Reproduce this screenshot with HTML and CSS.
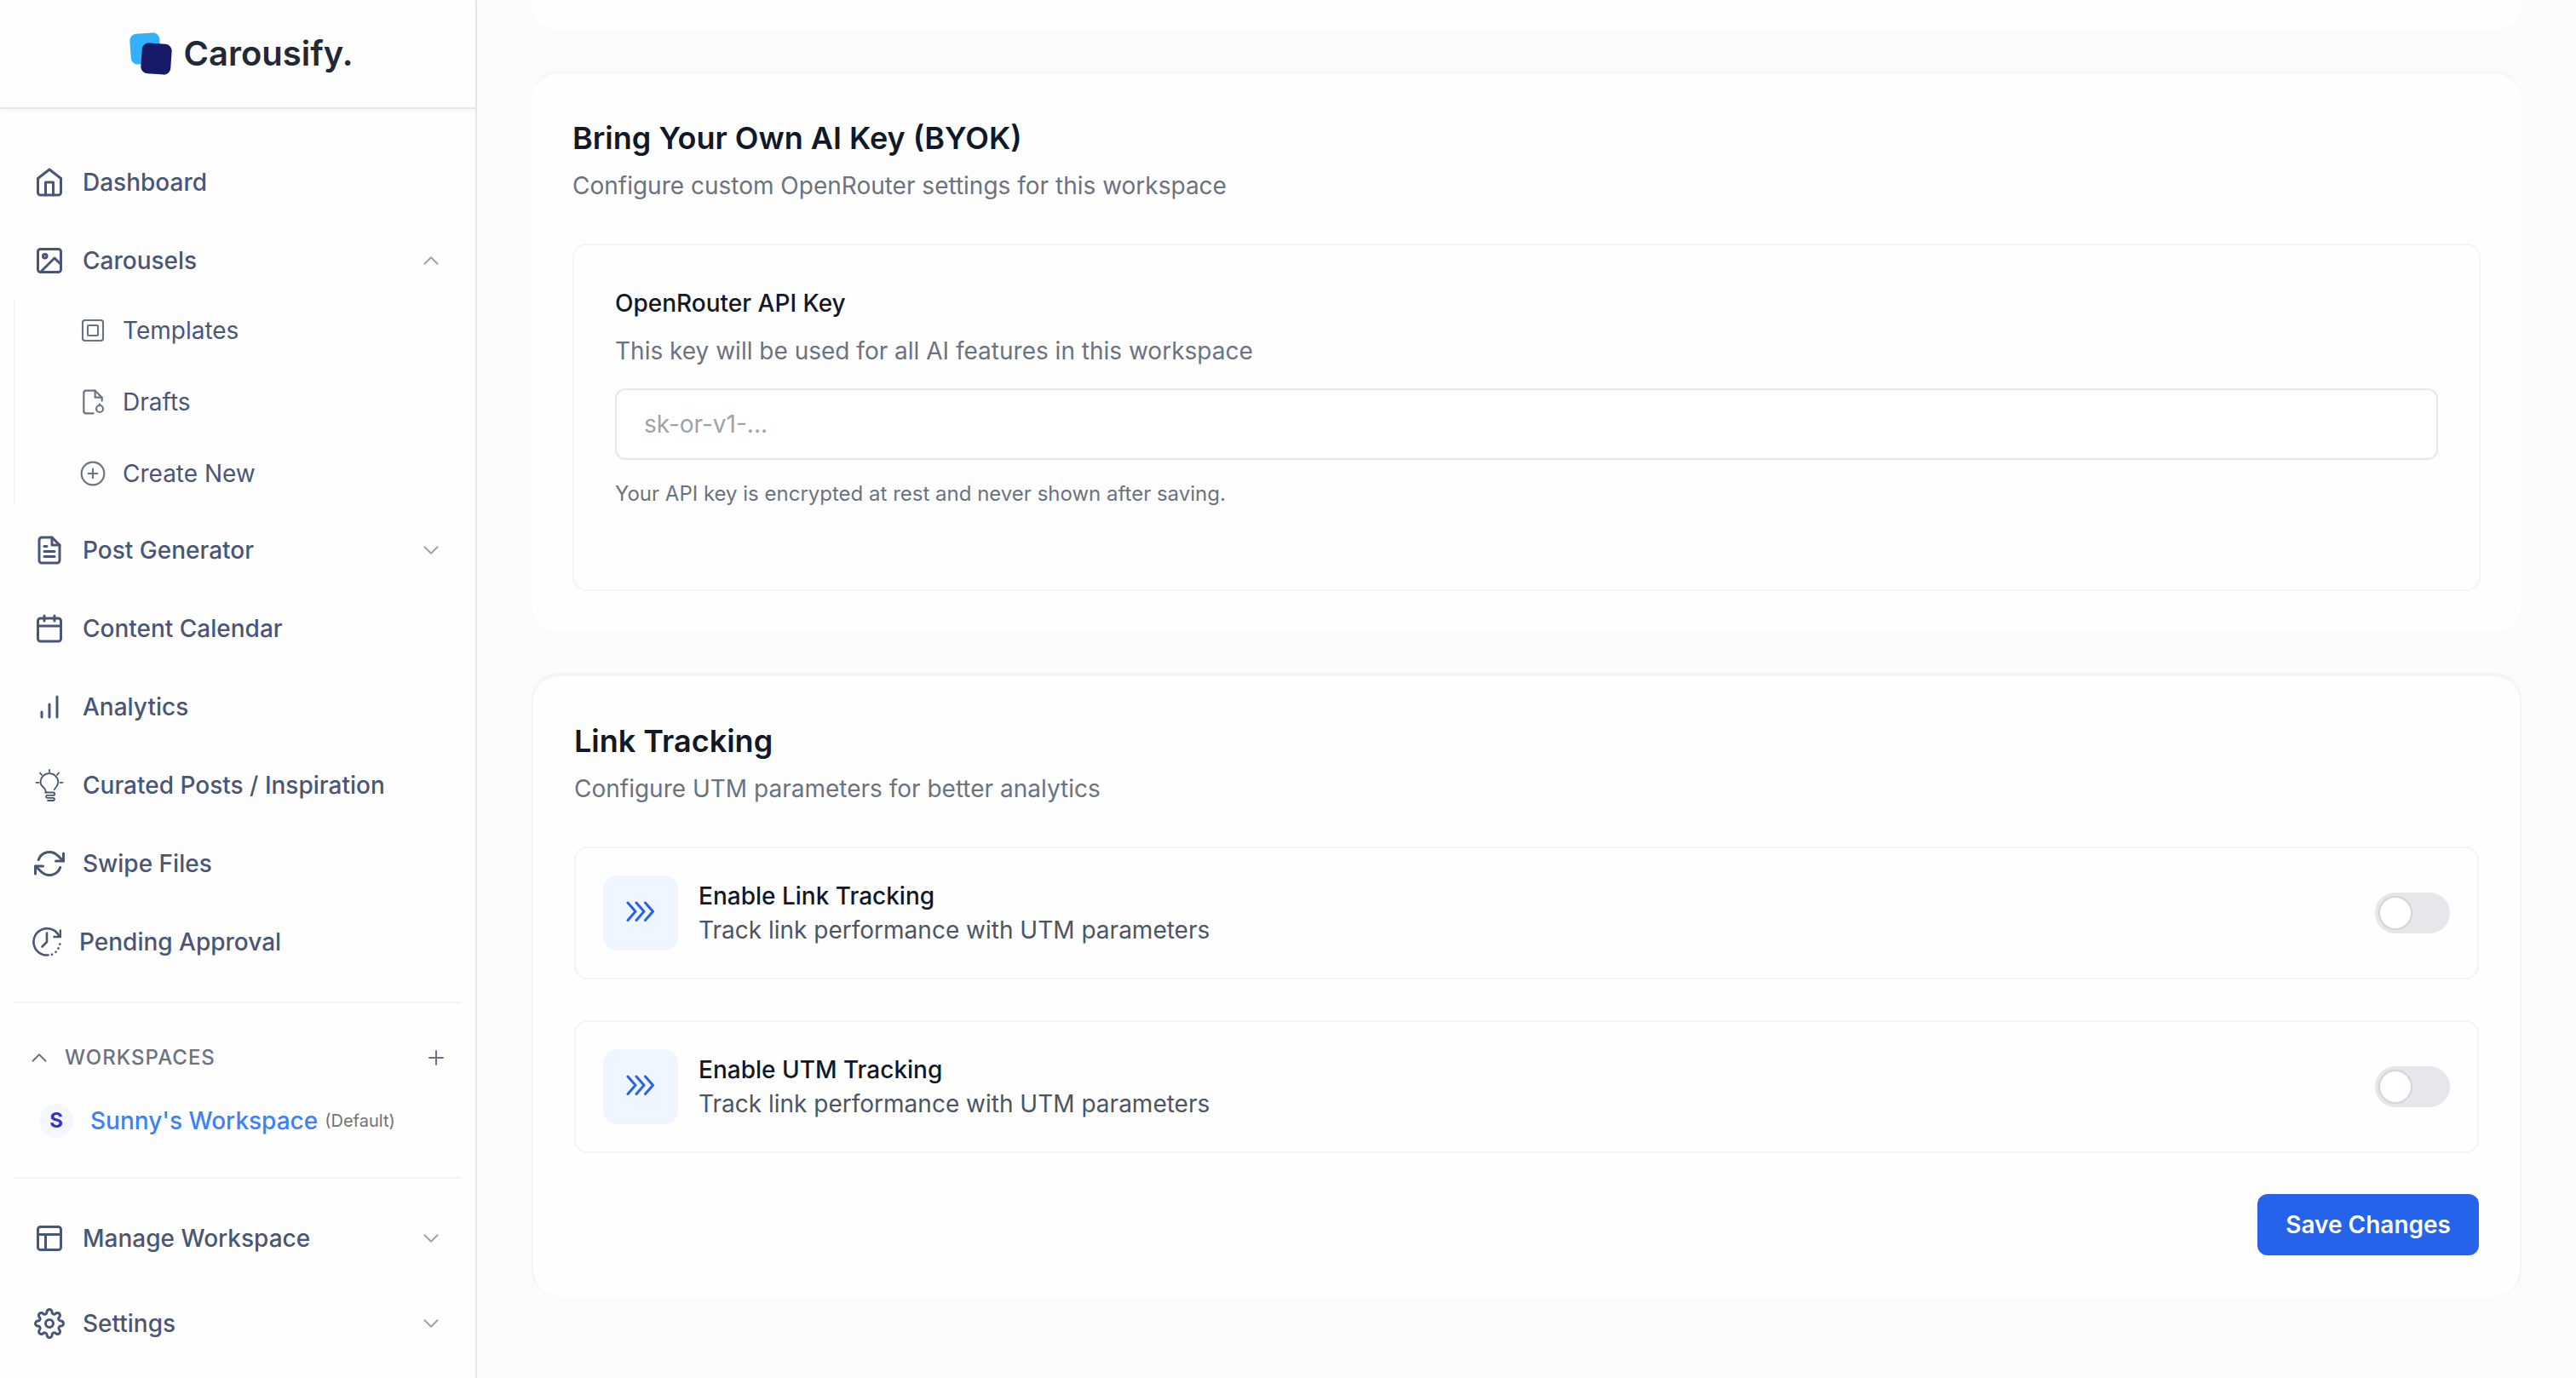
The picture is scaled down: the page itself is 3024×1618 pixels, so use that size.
FILE: index.html
```html
<!DOCTYPE html>
<html lang="en">
<head>
    <meta charset="UTF-8">
    <meta name="viewport" content="width=device-width, initial-scale=1.0">
    <title>Carousify - Workspace Settings</title>
    <link rel="stylesheet" href="styles.css">
</head>
<body>
    <div class="app">
        <aside class="sidebar">
            <a class="brand" href="#">
                <svg class="brand-logo" viewBox="0 0 50 50">
                    <rect x="1" y="1" width="35" height="36" rx="8" fill="#33b1ff" transform="rotate(-4 18.5 19)"/>
                    <rect x="14" y="13" width="35" height="36" rx="8" fill="#161a68" transform="rotate(4 31.5 31)"/>
                </svg>
                <span class="brand-name">Carousify.</span>
            </a>

            <nav class="nav">
                <ul class="nav-list">
                    <li>
                        <a class="nav-link" href="#">
                            <svg class="icon" viewBox="0 0 24 24"><path d="M3 9l9-7 9 7v11a2 2 0 0 1-2 2H5a2 2 0 0 1-2-2z"/><path d="M9 22V12h6v10"/></svg>
                            Dashboard
                        </a>
                    </li>
                    <li>
                        <button class="nav-link" type="button" aria-expanded="true">
                            <svg class="icon" viewBox="0 0 24 24"><rect x="3" y="3" width="18" height="18" rx="2"/><circle cx="8.5" cy="8.5" r="1.5"/><path d="M21 15l-5-5L5 21"/></svg>
                            Carousels
                            <svg class="chevron" viewBox="0 0 24 24"><path d="M4.5 15.75l7.5-7.5 7.5 7.5"/></svg>
                        </button>
                        <ul class="subnav">
                            <li>
                                <a class="subnav-link" href="#">
                                    <svg class="icon-sub" viewBox="0 0 24 24"><rect x="3" y="3" width="18" height="18" rx="2"/><rect x="7.5" y="7.5" width="9" height="9" rx="1"/></svg>
                                    Templates
                                </a>
                            </li>
                            <li>
                                <a class="subnav-link" href="#">
                                    <svg class="icon-sub" viewBox="0 0 24 24"><path d="M12.5 22H6a2 2 0 0 1-2-2V4a2 2 0 0 1 2-2h8l6 6v3"/><path d="M14 2v6h6"/><circle cx="18" cy="18" r="3"/><path d="M18 14v1"/></svg>
                                    Drafts
                                </a>
                            </li>
                            <li>
                                <a class="subnav-link" href="#">
                                    <svg class="icon-sub" viewBox="0 0 24 24"><circle cx="12" cy="12" r="10"/><path d="M12 8v8M8 12h8"/></svg>
                                    Create New
                                </a>
                            </li>
                        </ul>
                    </li>
                    <li>
                        <button class="nav-link" type="button" aria-expanded="false">
                            <svg class="icon" viewBox="0 0 24 24"><path d="M14 2H6a2 2 0 0 0-2 2v16a2 2 0 0 0 2 2h12a2 2 0 0 0 2-2V8z"/><path d="M14 2v6h6M16 13H8M16 17H8M10 9H8"/></svg>
                            Post Generator
                            <svg class="chevron" viewBox="0 0 24 24"><path d="M4.5 8.25l7.5 7.5 7.5-7.5"/></svg>
                        </button>
                    </li>
                    <li>
                        <a class="nav-link" href="#">
                            <svg class="icon" viewBox="0 0 24 24"><rect x="3" y="4" width="18" height="18" rx="2"/><path d="M16 2v4M8 2v4M3 10h18"/></svg>
                            Content Calendar
                        </a>
                    </li>
                    <li>
                        <a class="nav-link" href="#">
                            <svg class="icon" viewBox="0 0 24 24"><path d="M12 20V10M18 20V4M6 20v-4"/></svg>
                            Analytics
                        </a>
                    </li>
                    <li>
                        <a class="nav-link" href="#">
                            <svg class="icon icon-bulb" viewBox="0 0 36 40"><path d="M13.5 28.500v-2.500C13.500 23 7.500 22 7.500 16.500a10.400 10.400 0 0 1 20.800 0c0 4-2.800 6-4.600 8.500"/><path d="M13.500 28.500h9a1.700 1.700 0 0 1 0 3.400h-7a1.500 1.500 0 0 0 0 3h7a1.500 1.500 0 0 1 0 3.100H16"/><path d="M18 2v2.500M2.500 16.800h3M30.500 16.800h3M7 5.500l2 2.300M29 5.500l-2 2.300"/></svg>
                            Curated Posts / Inspiration
                        </a>
                    </li>
                    <li>
                        <a class="nav-link" href="#">
                            <svg class="icon" viewBox="0 0 24 24"><path d="M23 4v6h-6M1 20v-6h6"/><path d="M3.510 9a9 9 0 0 1 14.850-3.360L23 10M1 14l4.640 4.360A9 9 0 0 0 20.490 15"/></svg>
                            Swipe Files
                        </a>
                    </li>
                    <li>
                        <a class="nav-link nav-link-wide" href="#">
                            <svg class="icon icon-clock" viewBox="0 0 36 36"><path d="M20.500 33.500A15.700 15.700 0 1 1 33.500 11.500"/><path d="M35 4.500v7.500h-7.500"/><path d="M19 7.500v10.500l-5.500 5.500"/><path d="M34.300 20.500v.1M32.600 25.500l-.1.100M29.500 29.700l-.1.100M25 32.700l-.1.100"/></svg>
                            Pending Approval
                        </a>
                    </li>
                </ul>

                <section class="workspaces">
                    <div class="workspaces-head">
                        <button class="workspaces-toggle" type="button" aria-expanded="true">
                            <svg class="chevron" viewBox="0 0 24 24"><path d="M4.5 15.75l7.500-7.500 7.500 7.500"/></svg>
                            WORKSPACES
                        </button>
                        <button class="workspaces-add" type="button" aria-label="Add workspace">
                            <svg viewBox="0 0 24 24"><path d="M12 4v16M4 12h16"/></svg>
                        </button>
                    </div>
                    <a class="workspace" href="#">
                        <span class="avatar">S</span>
                        <span class="workspace-name">Sunny's Workspace</span>
                        <span class="workspace-tag">(Default)</span>
                    </a>
                </section>

                <ul class="nav-list nav-list-bottom">
                    <li>
                        <button class="nav-link" type="button" aria-expanded="false">
                            <svg class="icon" viewBox="0 0 24 24"><rect x="3" y="3" width="18" height="18" rx="2"/><path d="M3 9h18M9 21V9"/></svg>
                            Manage Workspace
                            <svg class="chevron" viewBox="0 0 24 24"><path d="M4.5 8.25l7.5 7.5 7.5-7.5"/></svg>
                        </button>
                    </li>
                    <li>
                        <button class="nav-link" type="button" aria-expanded="false">
                            <svg class="icon" viewBox="0 0 24 24"><circle cx="12" cy="12" r="3"/><path d="M19.4 15a1.65 1.65 0 0 0 .33 1.82l.06.06a2 2 0 0 1 0 2.83 2 2 0 0 1-2.83 0l-.06-.06a1.65 1.65 0 0 0-1.82-.33 1.65 1.65 0 0 0-1 1.51V21a2 2 0 0 1-2 2 2 2 0 0 1-2-2v-.09A1.65 1.65 0 0 0 9 19.4a1.65 1.65 0 0 0-1.82.33l-.06.06a2 2 0 0 1-2.83 0 2 2 0 0 1 0-2.83l.06-.06a1.65 1.65 0 0 0 .33-1.82 1.65 1.65 0 0 0-1.51-1H3a2 2 0 0 1-2-2 2 2 0 0 1 2-2h.09A1.65 1.65 0 0 0 4.6 9a1.65 1.65 0 0 0-.33-1.82l-.06-.06a2 2 0 0 1 0-2.83 2 2 0 0 1 2.83 0l.06.06a1.65 1.65 0 0 0 1.82.33H9a1.65 1.65 0 0 0 1-1.51V3a2 2 0 0 1 2-2 2 2 0 0 1 2 2v.09a1.65 1.65 0 0 0 1 1.51 1.65 1.65 0 0 0 1.82-.33l.06-.06a2 2 0 0 1 2.83 0 2 2 0 0 1 0 2.83l-.06.06a1.65 1.65 0 0 0-.33 1.82V9a1.65 1.65 0 0 0 1.51 1H21a2 2 0 0 1 2 2 2 2 0 0 1-2 2h-.09a1.65 1.65 0 0 0-1.51 1z"/></svg>
                            Settings
                            <svg class="chevron" viewBox="0 0 24 24"><path d="M4.5 8.25l7.5 7.5 7.5-7.5"/></svg>
                        </button>
                    </li>
                </ul>
            </nav>
        </aside>

        <main class="content">
            <div class="card card-previous"></div>

            <section class="card">
                <header class="card-header">
                    <h2>Bring Your Own AI Key (BYOK)</h2>
                    <p>Configure custom OpenRouter settings for this workspace</p>
                </header>
                <div class="key-box">
                    <label class="key-label" for="api-key">OpenRouter API Key</label>
                    <p class="key-help">This key will be used for all AI features in this workspace</p>
                    <input class="key-input" id="api-key" type="text" placeholder="sk-or-v1-...">
                    <p class="key-note">Your API key is encrypted at rest and never shown after saving.</p>
                </div>
            </section>

            <section class="card card-outlined">
                <header class="card-header">
                    <h2>Link Tracking</h2>
                    <p>Configure UTM parameters for better analytics</p>
                </header>
                <div class="option">
                    <span class="option-icon">
                        <svg viewBox="0 0 40 40"><path d="M5 8l9 10.250L5 28.500M15 8l9 10.250-9 10.250M25.500 8l9 10.250-9 10.250"/></svg>
                    </span>
                    <label class="option-text" for="link-tracking">
                        <span class="option-title">Enable Link Tracking</span>
                        <span>Track link performance with UTM parameters</span>
                    </label>
                    <input class="switch" id="link-tracking" type="checkbox">
                </div>
                <div class="option">
                    <span class="option-icon">
                        <svg viewBox="0 0 40 40"><path d="M5 8l9 10.250L5 28.500M15 8l9 10.250-9 10.250M25.500 8l9 10.250-9 10.250"/></svg>
                    </span>
                    <label class="option-text" for="utm-tracking">
                        <span class="option-title">Enable UTM Tracking</span>
                        <span>Track link performance with UTM parameters</span>
                    </label>
                    <input class="switch" id="utm-tracking" type="checkbox">
                </div>
                <button class="save-button" type="submit">Save Changes</button>
            </section>
        </main>
    </div>
</body>
</html>
```
FILE: styles.css
```css
*,
*::before {
    box-sizing: border-box;
}
body {
    margin: 0;
    background-color: #fafbfd;
    color: #111827;
    font-family: Inter, sans-serif;
    font-size: 28px;
    line-height: 40px;
    font-optical-sizing: none;
}
h2, p, ul {
    margin: 0;
    padding: 0;
}
ul {
    list-style: none;
}
a {
    color: inherit;
    text-decoration: none;
}
button, input {
    font: inherit;
    font-optical-sizing: none;
}
button {
    border: 0;
    background: none;
    color: inherit;
    cursor: pointer;
}
svg {
    flex-shrink: 0;
    fill: none;
    stroke: currentColor;
    stroke-width: 2;
    stroke-linecap: round;
    stroke-linejoin: round;
}
.app {
    display: flex;
    height: 100vh;
    overflow: hidden;
}

/* Sidebar */
.sidebar {
    flex: 0 0 560px;
    background-color: #fefefe;
    border-right: 2px solid #e5e7eb;
    color: #4a5675;
}
.brand {
    display: flex;
    align-items: center;
    justify-content: center;
    gap: 14px;
    height: 128px;
    padding-left: 8px;
    border-bottom: 2px solid #e5e7eb;
    box-shadow: 0 2px 4px rgba(0, 0, 0, 0.04);
}
.brand-logo {
    width: 50px;
    height: 50px;
    stroke: none;
}
.brand-name {
    font-size: 40px;
    font-weight: 600;
    line-height: 56px;
    font-optical-sizing: auto;
    color: #1f2937;
}
.nav {
    padding: 42px 16px 0;
}
.nav-list {
    display: flex;
    flex-direction: column;
    gap: 4px;
}
.nav-link {
    display: flex;
    align-items: center;
    gap: 21px;
    width: 100%;
    padding: 24px;
    font-weight: 500;
    text-align: left;
}
.nav-link-wide {
    padding-left: 20px;
}
.icon {
    width: 36px;
    height: 36px;
}
.icon-bulb {
    height: 40px;
}
.chevron {
    width: 24px;
    height: 24px;
    margin-left: auto;
    color: #9ca3af;
}
.subnav {
    display: flex;
    flex-direction: column;
    gap: 12px;
    margin: 2px 0 6px;
    border-left: 2px solid #f3f4f6;
}
.subnav-link {
    display: flex;
    align-items: center;
    gap: 19px;
    padding: 16px 0 16px 75px;
}
.icon-sub {
    width: 32px;
    height: 32px;
    color: #6b7280;
    stroke-width: 1.6;
}
.icon-bulb {
    stroke-width: 1.8;
}
.icon-clock {
    stroke-width: 2.6;
}
.workspaces {
    margin: 26px 0;
    padding: 44px 0 26px;
    border-top: 2px solid #f3f4f6;
    border-bottom: 2px solid #f3f4f6;
}
.workspaces-head {
    display: flex;
    align-items: center;
    justify-content: space-between;
    padding: 0 18px;
    color: #6b7280;
}
.workspaces-toggle {
    display: flex;
    align-items: center;
    gap: 18px;
    padding: 0;
    font-size: 24px;
    font-weight: 500;
    letter-spacing: 1px;
}
.workspaces-toggle .chevron {
    color: #6b7280;
}
.workspaces-add {
    display: flex;
    padding: 0;
}
.workspaces-add svg {
    width: 24px;
    height: 24px;
}
.workspace {
    display: flex;
    align-items: center;
    height: 80px;
    margin-top: 14px;
    padding-left: 30px;
}
.avatar {
    width: 40px;
    height: 40px;
    margin-right: 20px;
    border-radius: 50%;
    background-color: #f5f7ff;
    color: #3730d0;
    font-size: 24px;
    font-weight: 700;
    text-align: center;
}
.workspace-name {
    margin-right: 8px;
    color: #3b82f6;
    font-weight: 500;
}
.workspace-tag {
    color: #737373;
    font-size: 20px;
}
.nav-list-bottom {
    gap: 12px;
}

/* Settings */
.content {
    flex: 1;
    display: flex;
    flex-direction: column;
    gap: 48px;
    padding: 0 64px;
}
.card {
    padding: 48px;
    border-top: 2px solid #f3f4f6;
    border-radius: 32px;
    background-color: #fefefe;
}
.card-previous {
    height: 36px;
    padding: 0;
    border-top: 0;
    border-radius: 0 0 32px 32px;
}
.card-outlined {
    display: flex;
    flex-direction: column;
    gap: 48px;
    border: 2px solid #f3f4f6;
    border-top-width: 4px;
    border-bottom: 0;
}
.card-header h2 {
    margin-bottom: 8px;
    font-size: 36px;
    font-weight: 600;
    line-height: 56px;
}
.card-header p {
    color: #6b7280;
}
.key-box {
    display: flex;
    flex-direction: column;
    margin-top: 48px;
    padding: 48px 48px 96px;
    border: 2px solid #f3f4f6;
    border-radius: 16px;
}
.key-label {
    margin-bottom: 16px;
    font-weight: 500;
}
.key-help {
    margin-bottom: 24px;
    color: #6b7280;
}
.key-input {
    width: 100%;
    height: 84px;
    margin-bottom: 24px;
    padding: 0 32px;
    border: 2px solid #e5e7eb;
    border-radius: 12px;
    background-color: #fff;
}
.key-input::placeholder {
    color: #9ca3af;
}
.key-note {
    color: #6b7280;
    font-size: 24px;
    line-height: 32px;
}
.option {
    display: flex;
    align-items: center;
    gap: 24px;
    padding: 32px;
    border: 2px solid #f3f4f6;
    border-radius: 16px;
}
.option-icon {
    display: flex;
    align-items: center;
    justify-content: center;
    width: 88px;
    height: 88px;
    border-radius: 16px;
    background-color: #eff6ff;
    color: #2563eb;
}
.option-icon svg {
    width: 40px;
    height: 40px;
    stroke-width: 3;
}
.option-text {
    display: flex;
    flex: 1;
    flex-direction: column;
    color: #4b5563;
}
.option-title {
    color: #111827;
    font-weight: 500;
}
.switch {
    appearance: none;
    display: flex;
    width: 88px;
    height: 48px;
    margin: 0;
    padding: 4px;
    border-radius: 24px;
    background-color: #e5e7eb;
    cursor: pointer;
}
.switch::before {
    content: "";
    width: 40px;
    height: 40px;
    border: 2px solid #d1d5db;
    border-radius: 50%;
    background-color: #fff;
}
.switch:checked {
    justify-content: flex-end;
    background-color: #2563eb;
}
.save-button {
    align-self: flex-end;
    padding: 16px 33px;
    border-radius: 12px;
    background-color: #2563eb;
    color: #fff;
    font-weight: 600;
}
```
